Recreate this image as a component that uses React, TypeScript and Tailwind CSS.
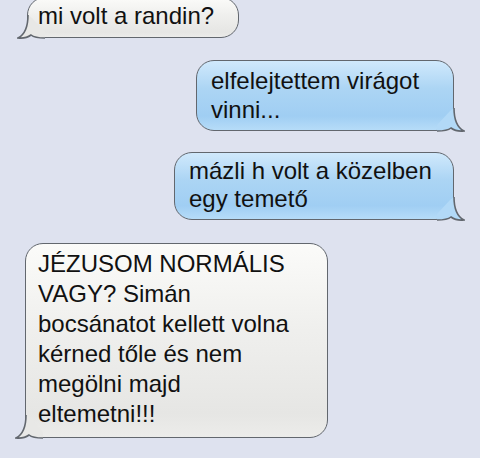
type Side = "left" | "right";

const Tail = ({ side, fill }: { side: Side; fill: string }) => (
  <svg
    width="28"
    height="28"
    viewBox="0 0 28 28"
    className={`absolute bottom-[-1.5px] ${
      side === "left" ? "left-[-11.5px]" : "right-[-11.5px] -scale-x-100"
    }`}
  >
    {/* filler that hides the rounded corner under the tail */}
    <path d="M11 4 C11 18 7 24 1 27 C6 27.6 11 26.2 14 24 C17 26.4 22 27 28 27 L28 21 L15 7 Z" fill={fill} />
    <path
      d="M11 4 C11 18 7 24 1 27 C6 27.6 11 26.2 14 24 C17 26.4 22 27 28 27"
      fill="none"
      stroke="#62676e"
      strokeWidth="1.6"
    />
  </svg>
);

const Bubble = ({
  side,
  lines,
  className,
}: {
  side: Side;
  lines: string[];
  className: string;
}) => {
  const gray = side === "left";
  return (
    <div
      className={`relative rounded-[18px] border-[1.6px] border-[#62676e] ${
        gray
          ? "bg-[linear-gradient(to_bottom,#fbfbf9,#efefed_45%,#e6e6e4_88%,#ececea)]"
          : "bg-[linear-gradient(to_bottom,#d0e9fc,#acd5f4_40%,#a0cef3_80%,#b6dcf8)]"
      } ${className}`}
    >
      <Tail side={side} fill={gray ? "#e8e8e6" : "#b2d9f7"} />
      <div className="relative">
        {lines.map((l) => (
          <div key={l} className="whitespace-nowrap">
            {l}
          </div>
        ))}
      </div>
    </div>
  );
};

export default function App() {
  return (
    <div
      className="w-[480px] h-[458px] overflow-hidden bg-[#dee2ef] flex flex-col text-[24px] text-[#111111]"
      style={{ fontFamily: '"Liberation Sans", Arial, sans-serif' }}
    >
      <Bubble
        side="left"
        lines={["mi volt a randin?"]}
        className="ml-[27px] mt-[-3px] w-[212px] h-[41px] pl-[10px] pt-[3px] leading-[30px]"
      />
      <Bubble
        side="right"
        lines={["elfelejtettem virágot", "vinni..."]}
        className="self-end mr-[26px] mt-[22px] w-[258px] h-[71px] pl-[14px] pt-[5px] leading-[29px]"
      />
      <Bubble
        side="right"
        lines={["mázli h volt a közelben", "egy temető"]}
        className="self-end mr-[26px] mt-[21px] w-[280px] h-[68px] pl-[14px] pt-[4px] leading-[28px]"
      />
      <Bubble
        side="left"
        lines={[
          "JÉZUSOM NORMÁLIS",
          "VAGY? Simán",
          "bocsánatot kellett volna",
          "kérned tőle és nem",
          "megölni majd",
          "eltemetni!!!",
        ]}
        className="ml-[25px] mt-[23px] w-[303px] h-[195px] pl-[12px] pt-[5px] leading-[30px]"
      />
    </div>
  );
}
